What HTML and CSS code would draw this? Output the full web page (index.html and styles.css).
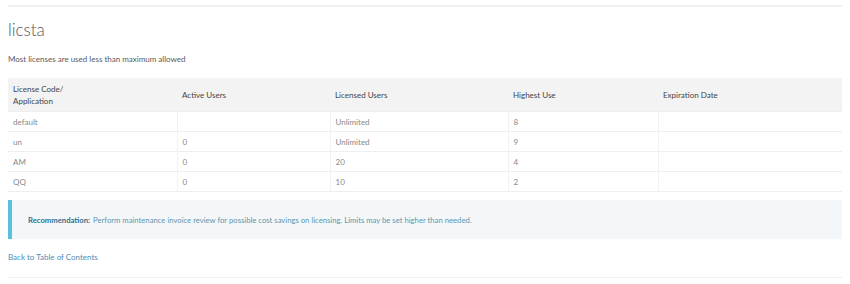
FILE: index.html
```html
<!DOCTYPE html>
<html lang="en">
  <head>
    <meta charset="UTF-8" />
    <meta name="viewport" content="width=device-width, initial-scale=1.0" />
    <title>licsta</title>
    <link rel="stylesheet" href="styles.css">
  </head>
  <body>
    <div class="section">
      <hr class="rule" />
      <h2 class="title">licsta</h2>
      <p class="summary">Most licenses are used less than maximum allowed</p>

      <!-- license table -->
      <table class="licenses">
        <thead>
          <tr>
            <th class="c1">License Code/<br />Application</th>
            <th class="c2">Active Users</th>
            <th class="c3">Licensed Users</th>
            <th class="c4">Highest Use</th>
            <th class="c5">Expiration Date</th>
          </tr>
        </thead>
        <tbody>
          <tr><td>default</td><td></td><td>Unlimited</td><td>8</td><td></td></tr>
          <tr><td>un</td><td>0</td><td>Unlimited</td><td>9</td><td></td></tr>
          <tr><td>AM</td><td>0</td><td>20</td><td>4</td><td></td></tr>
          <tr><td>QQ</td><td>0</td><td>10</td><td>2</td><td></td></tr>
        </tbody>
      </table>

      <div class="recommendation">
        <strong>Recommendation:</strong> Perform maintenance invoice review for possible cost savings on licensing. Limits may be set higher than needed.
      </div>

      <a class="back" href="#">Back to Table of Contents</a>
      <hr class="rule bottom" />
    </div>
  </body>
</html>
```

FILE: styles.css
```css
body {
  margin: 0;
  padding: 0;
  font-family: Lato, "Noto Sans", sans-serif;
  background-color: #fff;
  color: #555;
}

.section {
  padding: 5px 8px 0 8px;
}

.rule {
  margin: 0;
  border: none;
  border-top: 2px solid #f0f0f0;
}

.title {
  margin: 11px 0 0 0;
  font-size: 17px;
  font-weight: 300;
  line-height: 24px;
  color: #555;
}

.summary {
  margin: 11px 0 0 0;
  font-size: 8px;
  line-height: 12px;
  color: #5a5a5a;
}

/* license table */
.licenses {
  margin-top: 13px;
  width: 834px;
  border-collapse: collapse;
  font-size: 8px;
}

.licenses th {
  background: #f3f3f3;
  text-align: left;
  font-weight: 400;
  color: #444;
  padding: 4px 5px 4px 5px;
  line-height: 12px;
  height: 25px;
}

.licenses td {
  padding: 0 5px;
  height: 19px;
  line-height: 12px;
  color: #888;
  border-top: 1px solid #eee;
  border-left: 1px solid #f2f2f2;
}

.licenses td:first-child {
  border-left: none;
}

.licenses tbody tr:last-child td {
  border-bottom: 1px solid #eee;
}

.c1 { width: 159px; }
.c2 { width: 143px; }
.c3 { width: 168px; }
.c4 { width: 140px; }
.c5 { width: 174px; }

.recommendation {
  margin-top: 8px;
  height: 39px;
  box-sizing: border-box;
  display: flex;
  align-items: center;
  gap: 3px;
  padding-left: 16px;
  border-left: 4px solid #5bc0de;
  background: #f3f7fa;
  font-size: 7.7px;
  color: #5f95ab;
}

.recommendation strong {
  color: #31708f;
  font-weight: 700;
}

.back {
  display: block;
  margin-top: 12px;
  font-size: 8px;
  line-height: 12px;
  color: #4e8db5;
  text-decoration: none;
}

.rule.bottom {
  margin-top: 14px;
  border-top-width: 1px;
}
```
